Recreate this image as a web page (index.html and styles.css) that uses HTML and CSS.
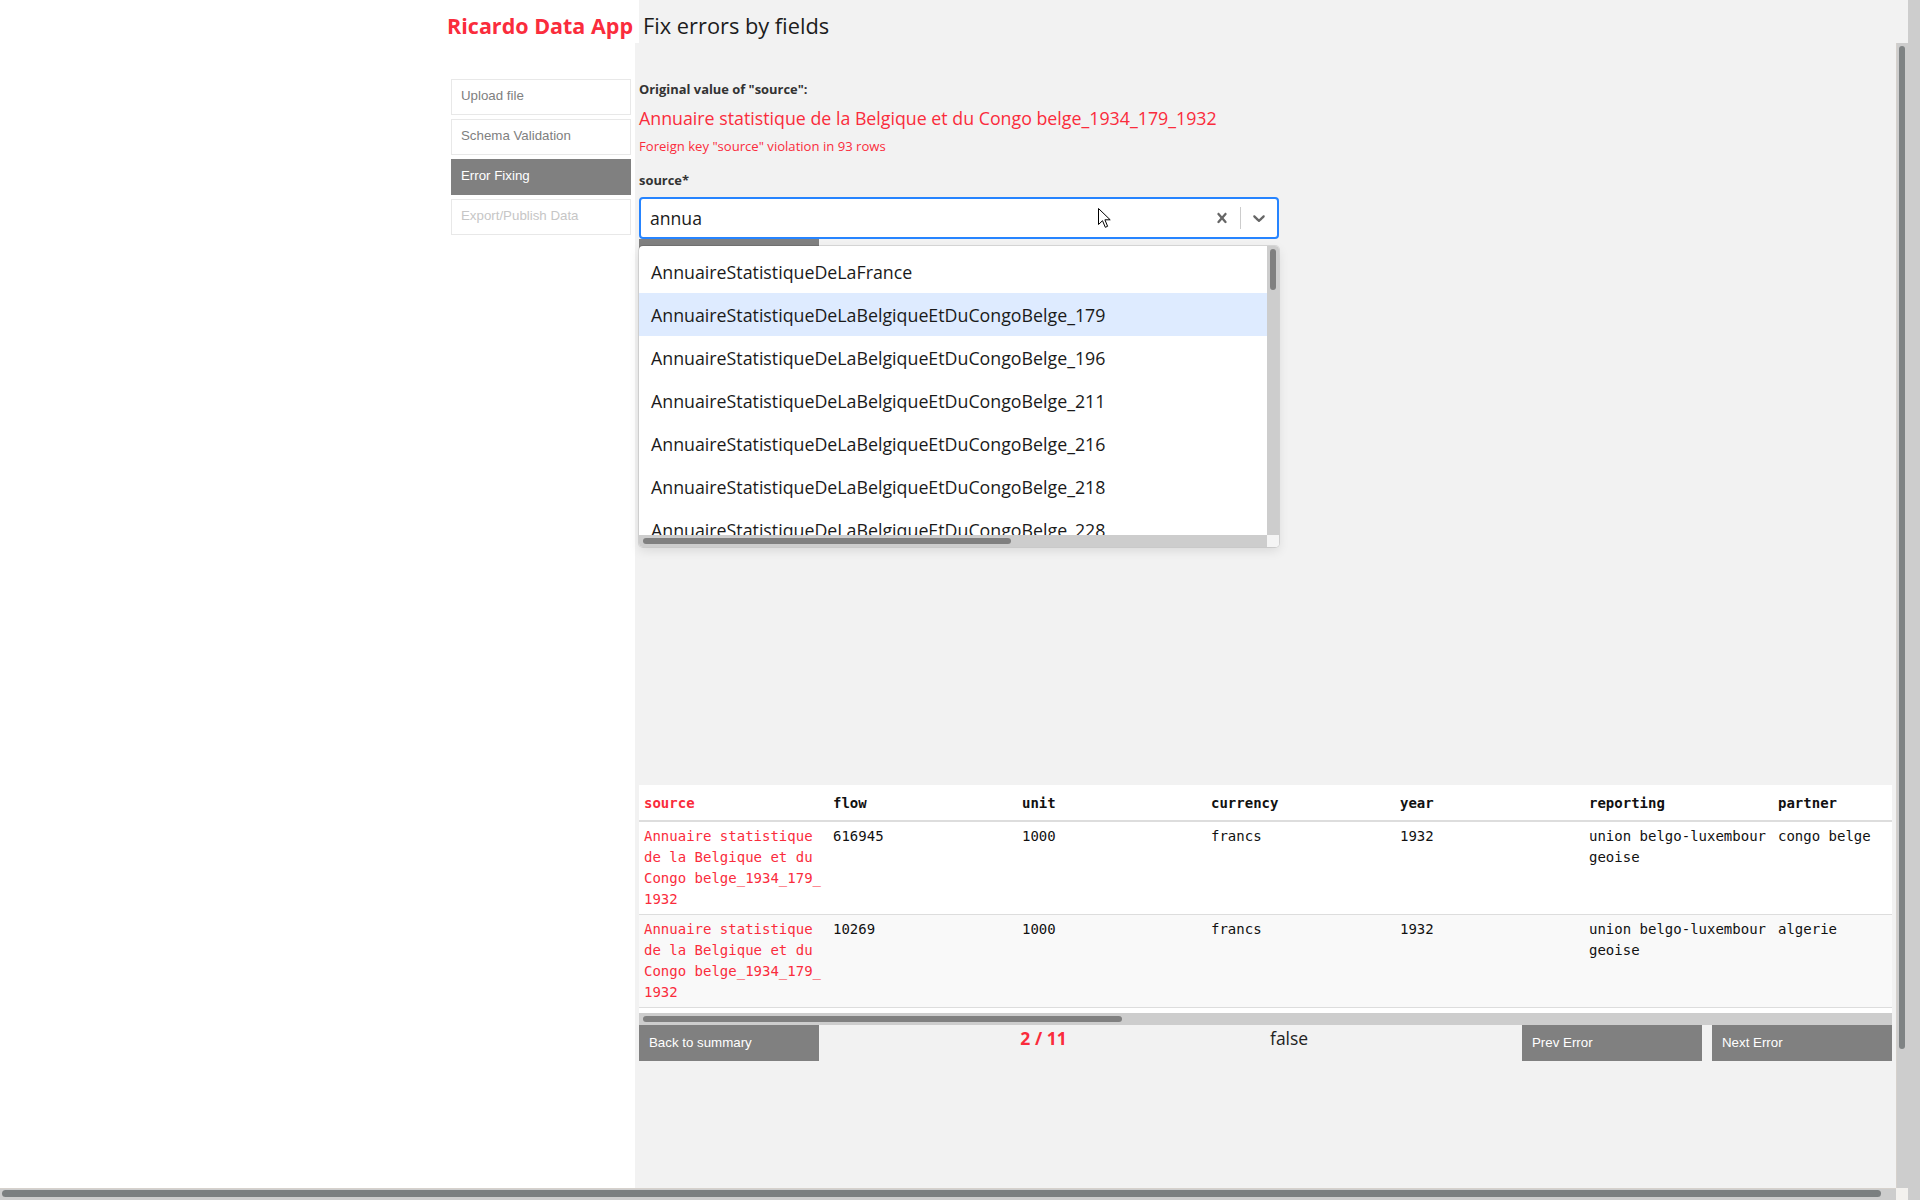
FILE: index.html
```html
<!DOCTYPE html>
<html lang="en">
<head>
<meta charset="utf-8">
<title>Ricardo Data App</title>
<link rel="stylesheet" href="styles.css">
</head>
<body>
<div class="screen">
  <div class="window">
    <div class="viewport">
      <header class="topbar">
        <div class="brand">Ricardo Data App</div>
        <h1 class="page-title">Fix errors by fields</h1>
      </header>
      <div class="main">
        <aside class="sidebar">
          <nav class="steps">
            <div class="step">Upload file</div>
            <div class="step">Schema Validation</div>
            <div class="step active">Error Fixing</div>
            <div class="step disabled">Export/Publish Data</div>
          </nav>
        </aside>
        <section class="content">
          <div class="orig-label">Original value of "source":</div>
          <div class="orig-value">Annuaire statistique de la Belgique et du Congo belge_1934_179_1932</div>
          <div class="violation">Foreign key "source" violation in 93 rows</div>
          <label class="field-label">source*</label>
          <div class="select">
            <div class="control">
              <div class="value">annua</div>
              <div class="indicators">
                <span class="ind">
                  <svg width="20" height="20" viewBox="0 0 20 20"><path fill="currentColor" d="M14.348 14.849c-0.469 0.469-1.229 0.469-1.697 0l-2.651-3.030-2.651 3.029c-0.469 0.469-1.229 0.469-1.697 0-0.469-0.469-0.469-1.229 0-1.697l2.758-3.15-2.759-3.152c-0.469-0.469-0.469-1.228 0-1.697s1.228-0.469 1.697 0l2.652 3.031 2.651-3.031c0.469-0.469 1.228-0.469 1.697 0s0.469 1.229 0 1.697l-2.758 3.152 2.758 3.15c0.469 0.469 0.469 1.229 0 1.698z"/></svg>
                </span>
                <span class="sep"></span>
                <span class="ind">
                  <svg width="20" height="20" viewBox="0 0 20 20"><path fill="currentColor" d="M4.516 7.548c0.436-0.446 1.043-0.481 1.576 0l3.908 3.747 3.908-3.747c0.533-0.481 1.141-0.446 1.574 0 0.436 0.445 0.408 1.197 0 1.615-0.406 0.418-4.695 4.502-4.695 4.502-0.217 0.223-0.502 0.335-0.787 0.335s-0.57-0.112-0.789-0.335c0 0-4.287-4.084-4.695-4.502s-0.436-1.17 0-1.615z"/></svg>
                </span>
              </div>
            </div>
            <div class="menu">
              <div class="menu-list">
                <div class="option">AnnuaireStatistiqueDeLaFrance</div>
                <div class="option focused">AnnuaireStatistiqueDeLaBelgiqueEtDuCongoBelge_179</div>
                <div class="option">AnnuaireStatistiqueDeLaBelgiqueEtDuCongoBelge_196</div>
                <div class="option">AnnuaireStatistiqueDeLaBelgiqueEtDuCongoBelge_211</div>
                <div class="option">AnnuaireStatistiqueDeLaBelgiqueEtDuCongoBelge_216</div>
                <div class="option">AnnuaireStatistiqueDeLaBelgiqueEtDuCongoBelge_218</div>
                <div class="option">AnnuaireStatistiqueDeLaBelgiqueEtDuCongoBelge_228</div>
              </div>
              <div class="menu-vscroll"><div class="menu-vthumb"></div></div>
              <div class="menu-hscroll"><div class="menu-hthumb"></div></div>
              <div class="menu-corner"></div>
            </div>
          </div>
          <button class="btn btn-under" aria-label="Fix"></button>

          <div class="table-wrap">
            <table class="data">
              <colgroup>
                <col class="c"><col class="c"><col class="c"><col class="c"><col class="c"><col class="c"><col class="c">
              </colgroup>
              <thead>
                <tr><th class="err">source</th><th>flow</th><th>unit</th><th>currency</th><th>year</th><th>reporting</th><th>partner</th></tr>
              </thead>
              <tbody>
                <tr>
                  <td class="err">Annuaire statistique de la Belgique et du Congo belge_1934_179_1932</td>
                  <td>616945</td><td>1000</td><td>francs</td><td>1932</td><td>union belgo-luxembourgeoise</td><td>congo belge</td>
                </tr>
                <tr>
                  <td class="err">Annuaire statistique de la Belgique et du Congo belge_1934_179_1932</td>
                  <td>10269</td><td>1000</td><td>francs</td><td>1932</td><td>union belgo-luxembourgeoise</td><td>algerie</td>
                </tr>
              </tbody>
            </table>
          </div>
          <div class="table-hscroll"><div class="table-hthumb"></div></div>

          <div class="controls">
            <button class="btn">Back to summary</button>
            <div class="counter">2 / 11</div>
            <div class="flag">false</div>
            <button class="btn">Prev Error</button>
            <button class="btn btn-next">Next Error</button>
          </div>
        </section>
        <div class="inner-vscroll"><div class="inner-vthumb"></div></div>
      </div>
    </div>
    <div class="page-hscroll">
      <div class="page-htrack"><div class="page-hthumb"></div></div>
      <div class="page-corner"></div>
    </div>
  </div>
  <div class="outer-vscroll"></div>
  <svg class="cursor" width="13" height="21" viewBox="0 0 13 21"><path d="M0.5 0.5 L0.5 16.5 L4.5 12.7 L7.3 19.3 L9.6 18.3 L6.9 11.8 L12.2 11.8 Z" fill="#fff" stroke="#000" stroke-width="1" stroke-linejoin="round"/></svg>
</div>
</body>
</html>
```

FILE: styles.css
```css
* { box-sizing: border-box; }
html, body { margin: 0; padding: 0; }
body {
  width: 1920px;
  height: 1200px;
  overflow: hidden;
  background: #fff;
  font-family: "Open Sans", "Noto Sans", sans-serif;
}

.screen { position: relative; display: flex; width: 1920px; height: 1200px; }
.window { display: flex; flex-direction: column; width: 1908px; }
.viewport { display: flex; flex-direction: column; height: 1188px; }

/* header */
.topbar { display: flex; flex: none; height: 43px; background: #f2f2f2; }
.brand {
  width: 639px;
  background: #fff;
  text-align: right;
  padding: 9px 6px 0 0;
  line-height: 34px;
  font-size: 21.5px;
  font-weight: 700;
  color: #fa2c3c;
  white-space: nowrap;
}
.page-title {
  margin: 0;
  padding: 9px 0 0 4px;
  line-height: 34px;
  font-size: 21.8px;
  font-weight: 400;
  color: #1c1c1c;
  white-space: nowrap;
}

/* body */
.main { display: flex; flex: 1; min-height: 0; }
.sidebar {
  width: 635px;
  flex: none;
  background: #fff;
  display: flex;
  justify-content: flex-end;
  padding: 36px 4px 0 0;
}
.steps { width: 180px; display: flex; flex-direction: column; gap: 4px; }
.step {
  height: 36px;
  border: 1px solid #e8e8e8;
  background: #fff;
  padding-left: 9px;
  line-height: 32px;
  font-family: "Liberation Sans", Arial, sans-serif;
  font-size: 13.3px;
  color: #808080;
}
.step.active { background: #808080; border-color: #808080; color: #fff; }
.step.disabled { color: #c6c6c6; }

.content {
  flex: 1;
  min-width: 0;
  background: #f2f2f2;
  padding: 37px 4px 0 4px;
}

.orig-label, .field-label {
  display: block;
  font-size: 12.9px;
  font-weight: 700;
  line-height: 18px;
  color: #333;
}
.orig-value {
  margin-top: 8px;
  font-size: 17.8px;
  line-height: 25px;
  color: #fa2c3c;
}
.violation {
  margin-top: 6px;
  font-size: 13.1px;
  line-height: 18px;
  color: #fa2c3c;
}
.field-label { margin-top: 16px; }

/* select */
.select { position: relative; width: 640px; margin-top: 8px; }
.control {
  display: flex;
  align-items: center;
  height: 42px;
  background: #fff;
  border: 2px solid #2684ff;
  border-radius: 4px;
}
.value { flex: 1; padding-left: 9px; font-size: 17.6px; color: #1a1a1a; }
.indicators { display: flex; align-self: stretch; }
.ind { width: 36px; display: flex; align-items: center; justify-content: center; color: #666; }
.sep { width: 1px; margin: 8px 0; background: #ccc; }

.menu {
  position: absolute;
  top: 49px;
  left: 0;
  z-index: 2;
  width: 640px;
  height: 301px;
  background: #fff;
  border-radius: 4px;
  box-shadow: 0 0 0 1px rgba(0,0,0,0.1), 0 4px 11px rgba(0,0,0,0.1);
  display: grid;
  grid-template-columns: 1fr 12px;
  grid-template-rows: 1fr 12px;
  overflow: hidden;
}
.menu-list { overflow: hidden; padding-top: 4px; }
.option {
  height: 43px;
  line-height: 45px;
  padding-left: 12px;
  font-size: 17.8px;
  color: #1a1a1a;
  white-space: nowrap;
}
.option.focused { background: #deebff; }
.menu-vscroll { background: #cdcdcd; padding: 3px; }
.menu-vthumb { width: 6px; height: 41px; border-radius: 3px; background: #808080; }
.menu-hscroll { background: #cdcdcd; padding: 3px 4px; }
.menu-hthumb { width: 368px; height: 6px; border-radius: 3px; background: #808080; }
.menu-corner { background: #f4f4f4; }

/* buttons */
.btn {
  display: block;
  flex: none;
  width: 180px;
  height: 36px;
  padding: 0 0 0 10px;
  border: 0;
  background: #808080;
  color: #fff;
  text-align: left;
  font-family: "Liberation Sans", Arial, sans-serif;
  font-size: 13.3px;
  line-height: 32px;
}

/* table */
.table-wrap {
  margin-top: 510px;
  background: #fff;
  overflow: hidden;
  padding-bottom: 5px;
}
.data {
  border-collapse: collapse;
  table-layout: fixed;
  width: 1323px;
  font-family: "DejaVu Sans Mono", monospace;
  font-size: 14px;
  color: #111;
}
.data col.c { width: 189px; }
.data th {
  text-align: left;
  font-weight: 700;
  padding: 8px 5px 6px;
  line-height: 21px;
  border-bottom: 2px solid #ddd;
}
.data td {
  vertical-align: top;
  padding: 4px 5px;
  line-height: 21px;
  word-break: break-all;
  border-bottom: 1px solid #ddd;
}
.data tbody tr:nth-child(even) td { background: #f9f9f9; }
.data .err { color: #fa2c3c; }

.table-hscroll { height: 12px; background: #cdcdcd; padding: 3px 4px; }
.table-hthumb { width: 479px; height: 6px; border-radius: 3px; background: #808080; }

.controls { display: flex; align-items: flex-start; height: 36px; }
.counter {
  width: 449px;
  text-align: center;
  font-size: 17.5px;
  font-weight: 700;
  line-height: 26px;
  color: #fa2c3c;
}
.flag {
  width: 254px;
  padding-left: 2px;
  font-size: 17.5px;
  line-height: 26px;
  color: #222;
}
.btn-next { margin-left: 10px; }

/* scrollbars of the window */
.inner-vscroll {
  width: 12px;
  flex: none;
  background: #cdcdcd;
  border-left: 1px solid #d6d1cc;
  padding: 3px 2px 0 2px;
}
.inner-vthumb { width: 6px; height: 1003px; border-radius: 3px; background: #7f8384; }

.page-hscroll { display: flex; height: 12px; flex: none; }
.page-htrack {
  flex: 1;
  background: #cdcdcd;
  border-top: 1px solid #d6d1cc;
  padding: 1px 15px 0 2px;
}
.page-hthumb { height: 7px; border-radius: 4px; background: #7b7f80; }
.page-corner { width: 12px; background: #f3f1ee; }

.outer-vscroll { width: 12px; flex: none; background: #cdcdcd; }

.cursor { position: absolute; left: 1098px; top: 208px; z-index: 5; }
```
